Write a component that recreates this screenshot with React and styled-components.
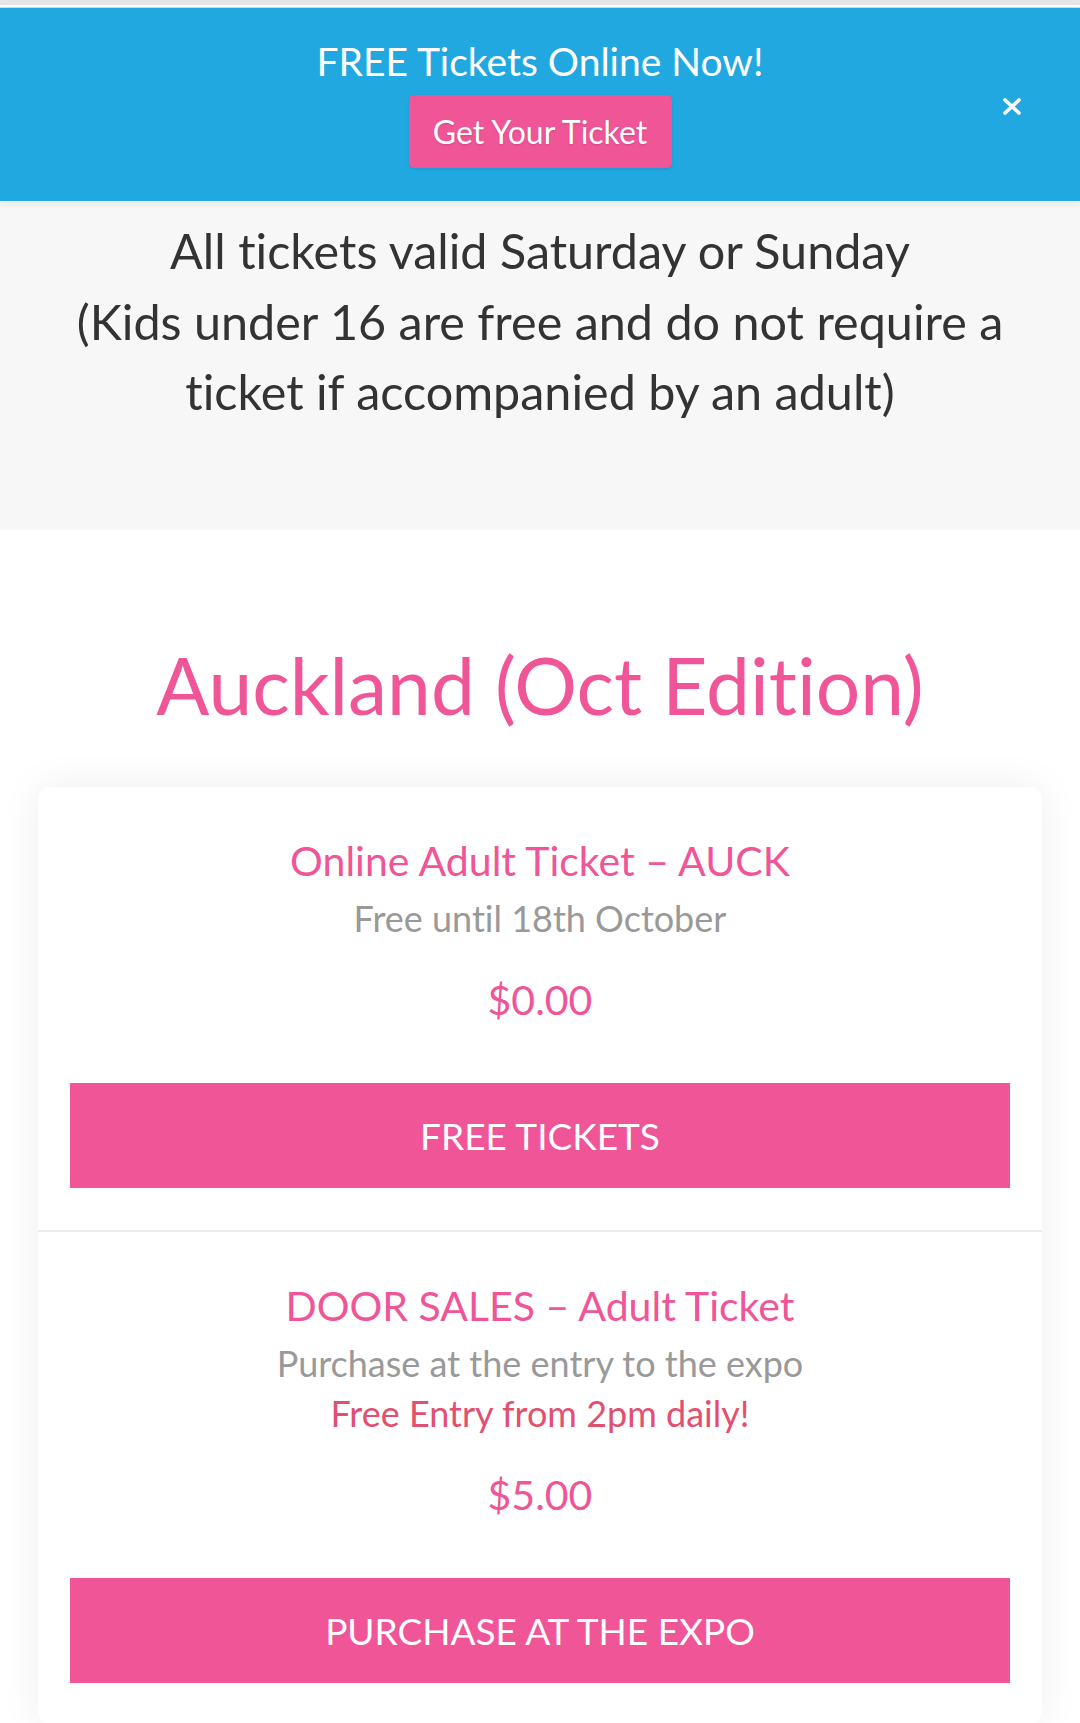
import React from "react";
import styled, { createGlobalStyle } from "styled-components";

const GlobalStyle = createGlobalStyle`
  html, body {
    margin: 0;
    padding: 0;
    background: #ffffff;
  }
  body {
    font-family: Lato, "Open Sans", "Liberation Sans", sans-serif;
    font-variant-ligatures: none;
    -webkit-font-smoothing: antialiased;
  }
  * { box-sizing: border-box; }
`;

const PINK = "#ef5597";

const Page = styled.div`
  width: 1080px;
  min-height: 1723px;
  display: flex;
  flex-direction: column;
  overflow: hidden;
`;

const TopStrip = styled.div`
  height: 8px;
  background: linear-gradient(#e6e6e8 0 5px, #ffffff 5px 7px, #bfe5f6 7px 8px);
`;

const Banner = styled.header`
  position: relative;
  z-index: 2;
  height: 193px;
  background: #22a8e0;
  display: flex;
  flex-direction: column;
  align-items: center;
  padding-top: 30px;
  box-shadow: 0 2px 8px rgba(0, 0, 0, 0.08);
`;

const BannerTitle = styled.div`
  color: #ffffff;
  font-size: 39px;
  line-height: 47px;
  font-weight: 400;
`;

const BannerButton = styled.a`
  margin-top: 10px;
  width: 263px;
  height: 73px;
  border-radius: 5px;
  background: ${PINK};
  color: #ffffff;
  font-size: 32px;
  display: flex;
  align-items: center;
  justify-content: center;
  text-decoration: none;
  text-shadow: 0 1px 2px rgba(0, 0, 0, 0.15);
  box-shadow: 0 1px 3px rgba(0, 0, 0, 0.12);
`;

const CloseButton = styled.button`
  position: absolute;
  right: 56px;
  top: 86px;
  width: 24px;
  height: 24px;
  padding: 0;
  border: 0;
  background: transparent;
  display: flex;
  align-items: center;
  justify-content: center;
  cursor: pointer;
`;

const Notice = styled.section`
  background: #f7f7f7;
  padding: 14px 20px 103px;
  text-align: center;
  color: #333333;
  font-size: 48.5px;
  line-height: 70.5px;
`;

const NoticeLine = styled.div``;

const Main = styled.main`
  padding: 105px 38px 0;
  display: flex;
  flex-direction: column;
  align-items: stretch;
`;

const CityTitle = styled.h1`
  margin: 0;
  text-align: center;
  color: ${PINK};
  font-size: 78.5px;
  line-height: 100px;
  font-weight: 400;
`;

const Card = styled.div`
  margin-top: 52px;
  background: #ffffff;
  border-radius: 10px;
  box-shadow: 0 0 40px rgba(0, 0, 0, 0.07);
  display: flex;
  flex-direction: column;
`;

const Ticket = styled.div`
  padding: 49px 32px ${(p) => (p.$last ? "40px" : "42px")};
  display: flex;
  flex-direction: column;
  align-items: center;
  text-align: center;
  border-bottom: ${(p) => (p.$last ? "none" : "2px solid #ececec")};
`;

const TicketName = styled.div`
  color: ${PINK};
  font-size: 41px;
  line-height: 49px;
`;

const Notes = styled.div`
  margin-top: 9px;
  display: flex;
  flex-direction: column;
`;

const TicketNote = styled.div`
  color: ${(p) => (p.$accent ? "#e2506f" : "#999999")};
  font-size: 36px;
  line-height: 49.5px;
`;

const Price = styled.div`
  margin-top: 32px;
  color: ${PINK};
  font-size: 41px;
  line-height: 50px;
`;

const ActionButton = styled.a`
  margin-top: 58px;
  align-self: stretch;
  height: 105px;
  background: ${PINK};
  color: #ffffff;
  font-size: 37px;
  text-transform: uppercase;
  display: flex;
  align-items: center;
  justify-content: center;
  text-decoration: none;
`;

const tickets = [
  {
    name: "Online Adult Ticket – AUCK",
    notes: [{ text: "Free until 18th October" }],
    price: "$0.00",
    action: "Free Tickets",
  },
  {
    name: "DOOR SALES – Adult Ticket",
    notes: [
      { text: "Purchase at the entry to the expo" },
      { text: "Free Entry from 2pm daily!", accent: true },
    ],
    price: "$5.00",
    action: "Purchase at the expo",
  },
];

export default function App() {
  return (
    <>
      <GlobalStyle />
      <Page>
        <TopStrip />
        <Banner>
          <BannerTitle>FREE Tickets Online Now!</BannerTitle>
          <BannerButton href="#">Get Your Ticket</BannerButton>
          <CloseButton aria-label="Close">
            <svg width="20" height="17" viewBox="0 0 20 17">
              <path
                d="M3 2 L17 15 M17 2 L3 15"
                stroke="#ffffff"
                strokeWidth="3.6"
                strokeLinecap="round"
                fill="none"
              />
            </svg>
          </CloseButton>
        </Banner>
        <Notice>
          <NoticeLine>All tickets valid Saturday or Sunday</NoticeLine>
          <NoticeLine>
            (Kids under 16 are free and do not require a ticket if accompanied by an adult)
          </NoticeLine>
        </Notice>
        <Main>
          <CityTitle>Auckland (Oct Edition)</CityTitle>
          <Card>
            {tickets.map((t, i) => (
              <Ticket key={t.name} $last={i === tickets.length - 1}>
                <TicketName>{t.name}</TicketName>
                <Notes>
                  {t.notes.map((n) => (
                    <TicketNote key={n.text} $accent={n.accent}>
                      {n.text}
                    </TicketNote>
                  ))}
                </Notes>
                <Price>{t.price}</Price>
                <ActionButton href="#">{t.action}</ActionButton>
              </Ticket>
            ))}
          </Card>
        </Main>
      </Page>
    </>
  );
}
